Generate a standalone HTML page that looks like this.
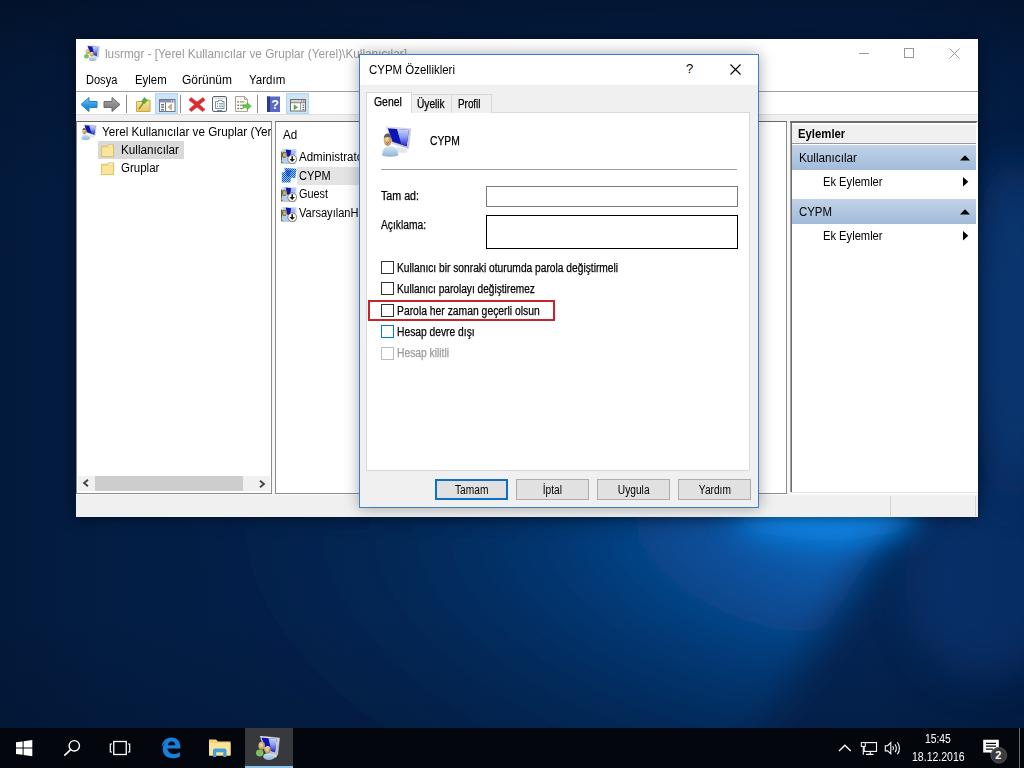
<!DOCTYPE html>
<html><head><meta charset="utf-8">
<style>
*{box-sizing:border-box;margin:0;padding:0}
html,body{width:1024px;height:768px;overflow:hidden}
body{position:relative;font-family:"Liberation Sans",sans-serif;font-size:12px;color:#000;background:#04204a}
.a{position:absolute}
#bg{position:absolute;left:0;top:0;width:1024px;height:768px;
 background:linear-gradient(180deg,rgba(2,12,30,.6) 0%,rgba(2,12,30,.25) 8%,rgba(2,14,34,0) 25%,rgba(2,14,34,0) 80%,rgba(2,14,34,.3) 100%),linear-gradient(90deg,#031a3c 0%,#031d43 10%,#04234f 50%,#042554 85%,#031e47 100%);}
#beam{position:absolute;left:0;top:0;width:1024px;height:768px}
#taskbar{position:absolute;left:0;top:728px;width:1024px;height:40px;background:#03060d}
#win{position:absolute;left:76px;top:39px;width:902px;height:478px;background:#fff;box-shadow:0 0 14px rgba(0,0,0,.55);overflow:hidden}
.t{position:absolute;white-space:nowrap;line-height:16px;height:16px;margin-top:-8px;transform:scaleX(var(--s,1));transform-origin:0 50%}
.d{font-size:12px;-webkit-text-stroke:.25px currentColor}
.pane{background:#fff;overflow:hidden}
.bord{border:1px solid #8c8c8c;border-top-color:#696969;pointer-events:none}
#dlg{position:absolute;left:359px;top:54px;width:400px;height:454px;background:#f0f0f0;border:1px solid #3a80c6;box-shadow:0 0 14px rgba(0,0,0,.35)}
.cb{position:absolute;width:13px;height:13px;border:1px solid #333;background:#fff}
.btn{position:absolute;height:21px;width:73px;top:424px;border:1px solid #adadad;background:#e1e1e1;font-size:12px;text-align:center;line-height:19px}
.btn span{display:inline-block;transform:scaleX(.85);position:relative;top:1px}
</style></head><body>
<svg width="0" height="0" style="position:absolute"><defs>
 <linearGradient id="scr" x1="0" y1="0" x2="1" y2="1"><stop offset="0" stop-color="#c9d6ff"/><stop offset=".55" stop-color="#7f93ee"/><stop offset="1" stop-color="#1a22b8"/></linearGradient>
 <linearGradient id="scr2" x1="0" y1="0" x2="0" y2="1"><stop offset="0" stop-color="#ccd8ff"/><stop offset=".5" stop-color="#8496ee"/><stop offset="1" stop-color="#1c24bc"/></linearGradient>
 <linearGradient id="frm" x1="0" y1="0" x2="1" y2="1"><stop offset="0" stop-color="#f0f2f7"/><stop offset="1" stop-color="#aeb6c6"/></linearGradient>
 <radialGradient id="hd" cx=".4" cy=".4" r=".7"><stop offset="0" stop-color="#f0dca0"/><stop offset="1" stop-color="#a98545"/></radialGradient>
 <linearGradient id="bd" x1="0" y1="0" x2="0" y2="1"><stop offset="0" stop-color="#d4e6f6"/><stop offset="1" stop-color="#8db4d8"/></linearGradient>
 <!-- single user + monitor, 32x32 -->
 <symbol id="pcuser" viewBox="0 0 32 32">
  <path d="M5.400 .8L31 2.900L28.400 23.400L10.800 17.800z" fill="url(#frm)" stroke="#c9cfdb" stroke-width=".6"/>
  <path d="M7 2.300L28.700 4.200L26.400 20.900L11.800 16.300z" fill="#0c14b4"/>
  <path d="M16.500 3.100L28.700 4.200L26.400 20.900L21 19.200z" fill="url(#scr2)"/>
  <path d="M17 21.500L27.500 24L26.500 27.500L14 27.500z" fill="#e4e7ee"/>
  <path d="M1 30.500Q1 21 9.500 21Q18 21 18 30.500Q9.500 33 1 30.500z" fill="url(#bd)"/>
  <ellipse cx="6.800" cy="14.300" rx="4" ry="6.300" fill="url(#hd)"/>
  <path d="M2.800 12.500Q3.500 7.500 7 7.800Q10.300 8 10.800 12.500Q7 10 2.800 12.500z" fill="#5d5d62"/>
  <path d="M5.200 16.500L6.800 18L8.600 16.300" stroke="#e05050" stroke-width="1" fill="none"/>
 </symbol>
 <!-- two users + monitor, 32x32 -->
 <symbol id="pcusers" viewBox="0 0 32 32">
  <path d="M5.500 0L31.500 2.500L29 25.500L12 20z" fill="url(#frm)" stroke="#d5dae4" stroke-width=".5"/>
  <path d="M7.200 2L27.300 4L25.300 21.500L13 17.500z" fill="#0c14b4"/>
  <path d="M16.600 2.900L27.300 4L25.300 21.500L20.500 19.900z" fill="url(#scr2)"/>
  <path d="M21 23L28 25.300L27 28.500L20 28.500z" fill="#e4e7ee"/>
  <ellipse cx="5" cy="22.600" rx="5" ry="4.600" fill="#7fbf5a"/>
  <ellipse cx="17.300" cy="27.300" rx="7.800" ry="4.700" fill="url(#bd)"/>
  <ellipse cx="7.600" cy="13" rx="4.400" ry="5.200" fill="url(#hd)"/>
  <ellipse cx="15.600" cy="18.300" rx="4.100" ry="4.900" fill="url(#hd)"/>
  <path d="M11.600 16Q15.600 11.500 19.600 16Q15.600 14.300 11.600 16z" fill="#ece6f4"/>
 </symbol>
 <!-- folder 16 -->
 <symbol id="fold" viewBox="0 0 16 16">
  <path d="M1.500 3.500H7.500L9 2H14.500V14.500H1.500z" fill="#f5dc84" stroke="#d9b95a" stroke-width="1"/>
  <path d="M2 5H14V14H2z" fill="#f9e59b"/>
  <path d="M9.500 2.500H13.500V3.800H9.500z" fill="#fff8e0"/>
 </symbol>
 <!-- list user icon 16 -->
 <symbol id="usr" viewBox="0 0 16 16">
  <path d="M.8 3.500V14.800H14.500" fill="none" stroke="#222" stroke-width="1.100" stroke-linejoin="round"/>
  <rect x="1.200" y="1" width="14.300" height="13.500" fill="#c5d6ec"/>
  <path d="M3.500 .8L15.500 1.800L14.300 11.500L6 9z" fill="#dfe8f6"/>
  <path d="M4.500 1.600L11 2.200L9 9.500L6.300 8.700z" fill="#1018b0"/>
  <path d="M10 2L14.800 2.500L13.800 10L9.500 8.800z" fill="#a9bdf2"/>
  <ellipse cx="3.300" cy="7" rx="2.300" ry="3.300" fill="#6e6440"/>
  <ellipse cx="3.500" cy="7.200" rx="1.500" ry="2.400" fill="#c8b070"/>
  <ellipse cx="4.800" cy="12.800" rx="4.300" ry="2.300" fill="#b4cfea"/>
  <circle cx="11.200" cy="11.200" r="4.300" fill="#fff" stroke="#222" stroke-width=".5"/>
  <path d="M10.400 8.300H12V11H14L11.200 14L8.400 11H10.400z" fill="#1a1a1a"/>
 </symbol>
 <symbol id="usrsel" viewBox="0 0 16 16">
  <path d="M3.500 .8L15.500 1.800L14.300 11.500L10 10.500L9.500 15.500H.8V5.500L3.800 5z" fill="url(#dith)"/>
  <path d="M5 3L10.500 3.500L8 10L5.500 9z" fill="#0a2ac8" opacity=".55"/>
 </symbol>
 <pattern id="dith" width="2" height="2" patternUnits="userSpaceOnUse"><rect width="2" height="2" fill="#9cc4f0"/><rect width="1" height="1" fill="#0a5ad0"/><rect x="1" y="1" width="1" height="1" fill="#0a5ad0"/></pattern>
</defs></svg>
<div id="bg"></div>
<svg id="beam" viewBox="0 0 1024 768"><defs>
<radialGradient id="bm" gradientUnits="userSpaceOnUse" cx="875" cy="508" r="680" gradientTransform="translate(875,508) scale(1,.55) translate(-875,-508)"><stop offset="0" stop-color="#0c74d2" stop-opacity=".95"/><stop offset=".12" stop-color="#0b68c0" stop-opacity=".9"/><stop offset=".28" stop-color="#0a5aac" stop-opacity=".78"/><stop offset=".45" stop-color="#094c96" stop-opacity=".56"/><stop offset=".65" stop-color="#073f80" stop-opacity=".32"/><stop offset=".85" stop-color="#063672" stop-opacity=".12"/><stop offset="1" stop-color="#053470" stop-opacity="0"/></radialGradient>
<filter id="bl" filterUnits="userSpaceOnUse" x="-200" y="-200" width="1424" height="1168"><feGaussianBlur stdDeviation="20"/></filter>
<filter id="bl2" filterUnits="userSpaceOnUse" x="-200" y="-200" width="1424" height="1168"><feGaussianBlur stdDeviation="15"/></filter>
</defs>
<polygon points="910,496 -40,530 -40,800 715,800" fill="url(#bm)" filter="url(#bl)"/>
<ellipse cx="985" cy="580" rx="80" ry="100" fill="#0a3f86" opacity=".45" filter="url(#bl)"/>
<ellipse cx="826" cy="514" rx="92" ry="26" fill="#0e8aec" opacity=".95" filter="url(#bl2)"/>
<ellipse cx="1015" cy="330" rx="50" ry="170" fill="#0b3c7e" opacity=".7" filter="url(#bl)"/>
</svg>

<!-- MAIN WINDOW (coords relative to 76,39) -->
<div id="win">
 <!-- title -->
 <span class="t" style="left:29px;top:14.5px;color:#999;--s:.983">lusrmgr - [Yerel Kullanıcılar ve Gruplar (Yerel)\Kullanıcılar]</span>
 <svg class="a" style="left:8px;top:6px" width="16" height="16"><use href="#pcusers"/></svg>
 <!-- caption buttons -->
 <div class="a" style="left:783px;top:14px;width:10px;height:1px;background:#999"></div>
 <div class="a" style="left:828px;top:9px;width:10px;height:10px;border:1px solid #999"></div>
 <svg class="a" style="left:873px;top:9px" width="11" height="11"><path d="M.5 .5l10 10M10.500 .5l-10 10" stroke="#999" stroke-width="1" fill="none"/></svg>
 <!-- menu -->
 <span class="t" style="left:10.4px;top:40.5px;--s:.92">Dosya</span>
 <span class="t" style="left:58.5px;top:40.5px;--s:.95">Eylem</span>
 <span class="t" style="left:106.2px;top:40.5px;--s:.999">Görünüm</span>
 <span class="t" style="left:173.2px;top:40.5px;--s:.96">Yardım</span>
 <div class="a" style="left:0;top:52px;width:902px;height:1px;background:#a0a0a0"></div>
 <!-- toolbar -->
 <div class="a" style="left:0;top:53px;width:902px;height:22px;background:#fff"></div>
 <div class="a" style="left:0;top:75px;width:902px;height:8px;background:#f0f0f0;border-top:1px solid #dfdfdf"></div>

 <!-- toolbar icons (win-relative: x-76, y-39) -->
 <svg class="a" style="left:0;top:53px" width="240" height="23" viewBox="76 92 240 23">
  <defs>
   <linearGradient id="gb" x1="0" y1="0" x2="0" y2="1"><stop offset="0" stop-color="#7fd0ff"/><stop offset=".5" stop-color="#2f9be8"/><stop offset="1" stop-color="#1873c8"/></linearGradient>
   <linearGradient id="gg" x1="0" y1="0" x2="0" y2="1"><stop offset="0" stop-color="#b5b5b5"/><stop offset=".5" stop-color="#8c8c8c"/><stop offset="1" stop-color="#7a7a7a"/></linearGradient>
   <linearGradient id="gf" x1="0" y1="0" x2="0" y2="1"><stop offset="0" stop-color="#f7e7a6"/><stop offset="1" stop-color="#e6c660"/></linearGradient>
   <linearGradient id="gh" x1="0" y1="0" x2="1" y2="0"><stop offset="0" stop-color="#2d3f9a"/><stop offset="1" stop-color="#5a6cc4"/></linearGradient>
  </defs>
  <!-- back -->
  <path d="M81 104.500L89 97.500V101.500H97V107.500H89V111.500z" fill="url(#gb)" stroke="#2a7fc4" stroke-width="1" stroke-linejoin="round"/>
  <!-- forward -->
  <path d="M120 104.500L112 97.500V101.500H104V107.500H112V111.500z" fill="url(#gg)" stroke="#6a6a6a" stroke-width="1" stroke-linejoin="round"/>
  <rect x="126" y="95" width="1" height="18" fill="#8d8d8d"/>
  <!-- folder up -->
  <path d="M136.500 101.500H142L143.500 100H150V111.500H136.500z" fill="url(#gf)" stroke="#c9a94a" stroke-width="1"/>
  <path d="M139 109L144 102" stroke="#7a8a3a" stroke-width="1.300"/>
  <path d="M141.500 101.500L144.500 97.500L147.500 101L145.500 101.500L145 103.500z" fill="#4fb33c" stroke="#3c962c" stroke-width=".6"/>
  <!-- show/hide tree (highlighted) -->
  <rect x="155.500" y="93.500" width="22" height="20" fill="#cce4f7" stroke="#b3d7f3"/>
  <rect x="159.500" y="99.500" width="15.500" height="12" fill="#fdfdfd" stroke="#6d7890"/>
  <rect x="160" y="100" width="14.500" height="2.500" fill="#8a93a8"/>
  <rect x="171" y="100.500" width="1" height="1" fill="#fff"/><rect x="173" y="100.500" width="1" height="1" fill="#fff"/>
  <rect x="165" y="102.500" width="1" height="9" fill="#6d7890"/>
  <rect x="161" y="104" width="3" height="1.500" fill="#6d7890"/><rect x="161" y="106.500" width="3" height="1.500" fill="#6d7890"/><rect x="161" y="109" width="3" height="1.500" fill="#6d7890"/>
  <path d="M171.500 104L168 107L171.500 110z" fill="#c2b57a" stroke="#9a905a" stroke-width=".5"/>
  <rect x="180" y="95" width="1" height="18" fill="#8d8d8d"/>
  <!-- delete X -->
  <path d="M191 97.500L197 102L203 97.500L205 100L199.500 104.500L205 109.500L202.500 111.500L197 107L191.500 111.500L189 109.500L194.500 104.500L189 100z" fill="#dc2a30" stroke="#c4504a" stroke-width=".8" stroke-linejoin="round"/>
  <!-- properties -->
  <rect x="212.500" y="96.500" width="14" height="15" rx="1.500" fill="#fbfcfd" stroke="#5f6368"/>
  <rect x="213.500" y="97.500" width="12" height="1.500" fill="#d4dae2"/>
  <path d="M215.500 101.500H218.500V100.300H222V101.500H224V108.500H215.500z" fill="#fff" stroke="#6f7782" stroke-width=".8"/>
  <rect x="217" y="103.300" width="1" height="1" fill="#3f6ea8"/><rect x="219" y="103.300" width="4" height="1" fill="#5b86bd"/>
  <rect x="217" y="105.700" width="1" height="1" fill="#3f6ea8"/><rect x="219" y="105.700" width="4" height="1" fill="#5b86bd"/>
  <rect x="217" y="110" width="5" height="1.200" fill="#5b8fc9"/>
  <!-- export list -->
  <path d="M235.500 96.500H244.500L247.500 99.500V111.500H235.500z" fill="#fcfaf2" stroke="#aaa697"/>
  <path d="M244.500 96.500V99.500H247.500" fill="none" stroke="#aaa697"/>
  <rect x="237.500" y="101.300" width="1.300" height="1.300" fill="#444"/><rect x="240" y="101.400" width="4.500" height="1.100" fill="#8a8a7a"/>
  <rect x="237.500" y="104.600" width="1.300" height="1.300" fill="#444"/><rect x="240" y="104.700" width="3.500" height="1.100" fill="#8a8a7a"/>
  <rect x="237.500" y="107.900" width="1.300" height="1.300" fill="#444"/><rect x="240" y="108" width="3.500" height="1.100" fill="#8a8a7a"/>
  <path d="M243 104.800H247V102.600L251.200 106.200L247 109.800V107.600H243z" fill="#62c44e" stroke="#49a83a" stroke-width=".6"/>
  <rect x="257" y="95" width="1" height="18" fill="#8d8d8d"/>
  <!-- help -->
  <rect x="267" y="96.500" width="13" height="15.500" fill="#5968c6"/>
  <rect x="267" y="96.500" width="3" height="15.500" fill="#2c3990"/>
  <text x="275" y="109" font-family="Liberation Sans,sans-serif" font-weight="bold" font-size="12.500" fill="#fff" text-anchor="middle">?</text>
  <!-- action pane toggle (highlighted) -->
  <rect x="286.500" y="93.500" width="22" height="20" fill="#cce4f7" stroke="#b3d7f3"/>
  <rect x="290.500" y="99.500" width="15" height="11.500" fill="#fdfdfd" stroke="#706e6a"/>
  <rect x="291" y="100" width="14" height="2.300" fill="#d6d4cf"/>
  <rect x="291" y="102.300" width="14" height=".9" fill="#706e6a"/>
  <rect x="301.200" y="100.500" width="1" height="1" fill="#666"/><rect x="303.200" y="100.500" width="1" height="1" fill="#666"/>
  <rect x="300.200" y="103" width=".9" height="8" fill="#8a8884"/>
  <rect x="302.500" y="104.600" width="1.800" height="1.200" fill="#666e80"/><rect x="302.500" y="106.800" width="1.800" height="1.200" fill="#666e80"/><rect x="302.500" y="109" width="1.800" height="1.200" fill="#666e80"/>
  <path d="M294 104.800L297.800 107.300L294 109.800z" fill="#63a94f" stroke="#4f8f3e" stroke-width=".4"/>
 </svg>
 <!-- body bg -->
 <div class="a" style="left:0;top:82px;width:902px;height:396px;background:#f0f0f0"></div>
 <div class="a" style="left:196px;top:83px;width:3px;height:371px;background:#f7f7f7"></div>
 <div class="a" style="left:711px;top:83px;width:3px;height:371px;background:#f7f7f7"></div>
 <!-- tree pane: outer (76,121)-(272,493) -->
 <div class="a pane" id="tree" style="left:0;top:82px;width:196px;height:373px">
  <div class="a" style="left:22px;top:20px;width:86px;height:18px;background:#d9d9d9"></div>
  <svg class="a" style="left:5px;top:3px" width="16" height="16"><use href="#pcuser"/></svg>
  <svg class="a" style="left:24px;top:22px" width="15" height="15"><use href="#fold"/></svg>
  <svg class="a" style="left:24px;top:40px" width="15" height="15"><use href="#fold"/></svg>
  <span class="t" style="left:26.4px;top:10.5px;--s:.975">Yerel Kullanıcılar ve Gruplar (Yerel)</span>
  <span class="t" style="left:45.3px;top:28.5px;--s:.976">Kullanıcılar</span>
  <span class="t" style="left:45.3px;top:46.7px;--s:.96">Gruplar</span>
  <!-- hscroll -->
  <div class="a" style="left:2px;top:355px;width:192px;height:15px;background:#f0f0f0"></div>
  <div class="a" style="left:19px;top:355px;width:147.600px;height:15px;background:#cdcdcd"></div>
  <svg class="a" style="left:6.200px;top:358px" width="8" height="8"><path d="M6 .7L2 4L6 7.300" stroke="#404040" stroke-width="1.800" fill="none"/></svg>
  <svg class="a" style="left:181.500px;top:358.500px" width="8" height="8"><path d="M2 .7L6 4L2 7.300" stroke="#404040" stroke-width="1.800" fill="none"/></svg>
  <div class="a bord" style="left:0;top:0;width:196px;height:373px"></div>
 </div>
 <!-- middle pane: outer (275,121)-(787,493) -->
 <div class="a pane" id="mid" style="left:199px;top:82px;width:512px;height:373px">
  <div class="a" style="left:22px;top:45.500px;width:200px;height:18px;background:#e4e4e4"></div>
  <svg class="a" style="left:6px;top:27px" width="16" height="16"><use href="#usr"/></svg>
  <svg class="a" style="left:6px;top:46px" width="16" height="16"><use href="#usrsel"/></svg>
  <svg class="a" style="left:6px;top:65px" width="16" height="16"><use href="#usr"/></svg>
  <svg class="a" style="left:6px;top:84.500px" width="16" height="16"><use href="#usr"/></svg>
  <span class="t" style="left:8.3px;top:13.700px;--s:.97">Ad</span>
  <span class="t" style="left:24px;top:35.800px;--s:.961">Administrator</span>
  <span class="t" style="left:24px;top:54.6px;--s:.914">CYPM</span>
  <span class="t" style="left:24px;top:73.3px;--s:.906">Guest</span>
  <span class="t" style="left:24px;top:92.3px;--s:.923">VarsayılanHesap</span>
  <div class="a bord" style="left:0;top:0;width:512px;height:373px"></div>
 </div>
 <!-- actions pane: outer (790,121)-(978,493) ; children relative to (790,121) -->
 <div class="a pane" id="act" style="left:714px;top:82px;width:188px;height:371px">
  <div class="a" style="left:2px;top:3.600px;width:184px;height:18px;background:#f0f0f0"></div>
  <div class="a" style="left:2px;top:21.500px;width:184px;height:1px;background:#9a9a9a"></div>
  <span class="t" style="left:7.600px;top:13.300px;font-weight:bold;--s:.945">Eylemler</span>
  <div class="a" style="left:2px;top:23.500px;width:184px;height:25px;background:linear-gradient(#c2d3e8,#a1bbda)"></div>
  <span class="t" style="left:9.200px;top:36.6px;--s:.976">Kullanıcılar</span>
  <span class="t" style="left:33.400px;top:60.5px;--s:.93">Ek Eylemler</span>
  <div class="a" style="left:2px;top:78px;width:184px;height:24.500px;background:linear-gradient(#c2d3e8,#a1bbda)"></div>
  <span class="t" style="left:9.200px;top:91px;--s:.95">CYPM</span>
  <span class="t" style="left:33.400px;top:114.5px;--s:.93">Ek Eylemler</span>
  <svg class="a" style="left:169.700px;top:33.800px" width="10" height="6"><path d="M0 5.500L5 .3L10 5.500z" fill="#000"/></svg>
  <svg class="a" style="left:169.700px;top:88.300px" width="10" height="6"><path d="M0 5.500L5 .3L10 5.500z" fill="#000"/></svg>
  <svg class="a" style="left:172.600px;top:55.900px" width="6" height="10"><path d="M0 0L5.300 4.700L0 9.400z" fill="#000"/></svg>
  <svg class="a" style="left:172.600px;top:109.900px" width="6" height="10"><path d="M0 0L5.300 4.700L0 9.400z" fill="#000"/></svg>
  <div class="a" style="left:0;top:0;width:188px;height:371px;border-left:2px solid #6d6d6d;border-top:2.500px solid #6d6d6d;border-right:2px solid #fff"></div>
  <div class="a" style="left:0;top:2px;width:1px;height:369px;background:#a2a2a2"></div>
 </div>
 <div class="a" style="left:714px;top:453px;width:188px;height:2px;background:#fff;border-top:1px solid #e3e3e3"></div>
 <!-- status bar -->
 <div class="a" style="left:0;top:455px;width:902px;height:1px;background:#f8f8f8"></div>
 <div class="a" style="left:814px;top:457px;width:1px;height:20px;background:#d4d4d4"></div>
 <div class="a" style="left:899px;top:457px;width:1px;height:20px;background:#d4d4d4"></div>
</div>

<!-- DIALOG (coords relative to 360,55 inside border) -->
<div id="dlg">
 <div class="a" style="left:0;top:0;width:398px;height:30px;background:#fff"></div>
 <span class="t" style="left:8.750px;top:15px;--s:.955">CYPM Özellikleri</span>
 <span class="t" style="left:326px;top:14px;font-size:13px">?</span>
 <svg class="a" style="left:370px;top:9px" width="11" height="11"><path d="M.5 .5l10 10M10.500 .5l-10 10" stroke="#000" stroke-width="1.1" fill="none"/></svg>
 <!-- tab panel -->
 <div class="a" style="left:6px;top:57px;width:384px;height:359px;background:#fff;border:1px solid #d9d9d9"></div>
 <!-- tabs -->
 <div class="a" style="left:51px;top:39px;width:41px;height:19px;background:#f0f0f0;border:1px solid #d9d9d9;border-bottom:none"></div>
 <div class="a" style="left:91px;top:39px;width:41px;height:19px;background:#f0f0f0;border:1px solid #d9d9d9;border-bottom:none"></div>
 <div class="a" style="left:6px;top:37px;width:46px;height:21px;background:#fff;border:1px solid #d9d9d9;border-bottom:none"></div>
 <span class="t d" style="left:13.750px;top:47px;--s:.868">Genel</span>
 <span class="t d" style="left:56.700px;top:49px;--s:.848">Üyelik</span>
 <span class="t d" style="left:98px;top:49px;--s:.823">Profil</span>
 <span class="t d" style="left:69.700px;top:85.600px;--s:.857">CYPM</span>
 <svg class="a" style="left:20.500px;top:71px" width="31" height="31"><use href="#pcuser"/></svg>
 <div class="a" style="left:21px;top:114px;width:356px;height:1px;background:#a0a0a0"></div>
 <span class="t d" style="left:20.500px;top:141px;--s:.89">Tam ad:</span>
 <span class="t d" style="left:20.800px;top:170px;--s:.854">Açıklama:</span>
 <div class="a" style="left:126px;top:131px;width:252px;height:21px;background:#fff;border:1px solid #7a7a7a"></div>
 <div class="a" style="left:126px;top:160px;width:252px;height:34px;background:#fff;border:1px solid #000"></div>
 <!-- checkboxes -->
 <div class="cb" style="left:21px;top:206px"></div>
 <div class="cb" style="left:21px;top:227px"></div>
 <div class="cb" style="left:21px;top:249px"></div>
 <div class="cb" style="left:21px;top:270px;border-color:#0078d7"></div>
 <div class="cb" style="left:21px;top:292px;border-color:#bcbcbc"></div>
 <span class="t d" style="left:36.500px;top:213px;--s:.852">Kullanıcı bir sonraki oturumda parola değiştirmeli</span>
 <span class="t d" style="left:36.500px;top:234px;--s:.844">Kullanıcı parolayı değiştiremez</span>
 <span class="t d" style="left:36.500px;top:256px;--s:.863">Parola her zaman geçerli olsun</span>
 <span class="t d" style="left:36.500px;top:277px;--s:.856">Hesap devre dışı</span>
 <span class="t d" style="left:36.500px;top:298px;--s:.857;color:#9a9a9a">Hesap kilitli</span>
 <div class="a" style="left:8px;top:245px;width:187px;height:21px;border:2px solid #c8222c"></div>
 <!-- buttons -->
 <div class="btn" style="left:75px;border:2px solid #0a70c8;line-height:17px"><span>Tamam</span></div>
 <div class="btn" style="left:156px"><span>İptal</span></div>
 <div class="btn" style="left:237px"><span>Uygula</span></div>
 <div class="btn" style="left:318px"><span>Yardım</span></div>
</div>

<div id="taskbar">
 <!-- coords: page y - 728 -->
 <div class="a" style="left:245px;top:0;width:48px;height:38px;background:#38393c"></div>
 <div class="a" style="left:245px;top:38px;width:48px;height:2px;background:#8ec6ee"></div>
 <svg class="a" style="left:0;top:0" width="1024" height="40" viewBox="0 728 1024 40">
  <!-- start -->
  <path d="M16 742.300L22.600 741.400V747.600H16zM23.600 741.200L32.300 740V747.600H23.600zM16 748.600H22.600V754.800L16 753.900zM23.600 748.600H32.300V756.300L23.600 755z" fill="#fff"/>
  <!-- search -->
  <circle cx="74.300" cy="745.800" r="5.200" fill="none" stroke="#fff" stroke-width="1.400"/>
  <path d="M70.600 749.600L64.300 755.600" stroke="#fff" stroke-width="1.500"/>
  <!-- task view -->
  <rect x="113.750" y="741.500" width="12.500" height="13" fill="none" stroke="#fff" stroke-width="1.300"/>
  <path d="M112 744H110.300V752H112M128 744H129.700V752H128" fill="none" stroke="#fff" stroke-width="1.200"/>
  <!-- edge -->
  <path d="M161.500 747.500C162 741.500 166 737.600 171.500 737.600C177.500 737.600 180.600 742 180.500 748.500H167.500C167.800 752 170.500 754 174 754C176.500 754 178.500 753.300 180 752.300V756.500C178 757.700 175.500 758.300 172.500 758.300C166.500 758.300 162.700 754.500 162.700 749C162.700 745.500 164.500 743 167.500 741.500C165 742.500 163 744.500 161.500 747.500zM167.700 745.300H175.300C175.300 743 174 741.600 171.800 741.600C169.600 741.600 168.200 743 167.700 745.300z" fill="#1481dc"/>
  <!-- explorer -->
  <path d="M209 739.500H216L218 741.500H230.500V755.500H209z" fill="#f5d272"/>
  <path d="M209 743H230.500V755.500H209z" fill="#fbe39a"/>
  <path d="M213 757V750.500Q213 748.500 215 748.500H224.500Q226.500 748.500 226.500 750.500V757H223.300V752.300H216.200V757z" fill="#44a0dc"/>
  <!-- tray chevron -->
  <path d="M839 751L844.900 745.200L850.800 751" fill="none" stroke="#fff" stroke-width="1.300"/>
  <!-- network -->
  <rect x="864.200" y="742.600" width="12.300" height="8.800" fill="none" stroke="#fff" stroke-width="1.100"/>
  <path d="M870.300 751.400V754.400M866 754.400H873.500" stroke="#fff" stroke-width="1.100" fill="none"/>
  <rect x="861.300" y="742.600" width="4" height="3.800" fill="#05070e" stroke="#fff" stroke-width="1"/>
  <path d="M863.300 746.400V754.800" stroke="#fff" stroke-width="1.100"/>
  <!-- volume -->
  <path d="M885.300 745.700H887.700L890.800 742.500V753.800L887.700 750.900H885.300z" fill="none" stroke="#fff" stroke-width="1.100" stroke-linejoin="miter"/>
  <path d="M892.800 746.200Q894.300 748.200 892.800 750.300M895 744.200Q897.800 748.200 895 752.300M897.400 742.200Q901.500 748.200 897.400 754.300" fill="none" stroke="#fff" stroke-width="1.100"/>
  <!-- notification -->
  <path d="M983.200 739.800H998.800V752.500H993.500L996.500 755.500H994.500L990 752.500H983.200z" fill="#fff"/>
  <path d="M986 743.300H996M986 746.200H996M986 749.100H993" stroke="#05070e" stroke-width="1.200"/>
  <circle cx="998.800" cy="755.300" r="7.800" fill="#3b3b3d" stroke="#55565a" stroke-width="1"/>
  <rect x="1019" y="728" width="1" height="40" fill="#6b6b6b"/>
 </svg>
 <svg class="a" style="left:256px;top:8px" width="24" height="24"><use href="#pcusers"/></svg>
 <span class="t" style="left:925.100px;top:10.500px;color:#fff;--s:.86">15:45</span>
 <span class="t" style="left:912.200px;top:28.500px;color:#fff;--s:.877">18.12.2016</span>
 <span class="t" style="left:995.300px;top:27.300px;color:#fff;font-weight:bold;font-size:11px;--s:1">2</span>
</div>
</body></html>
